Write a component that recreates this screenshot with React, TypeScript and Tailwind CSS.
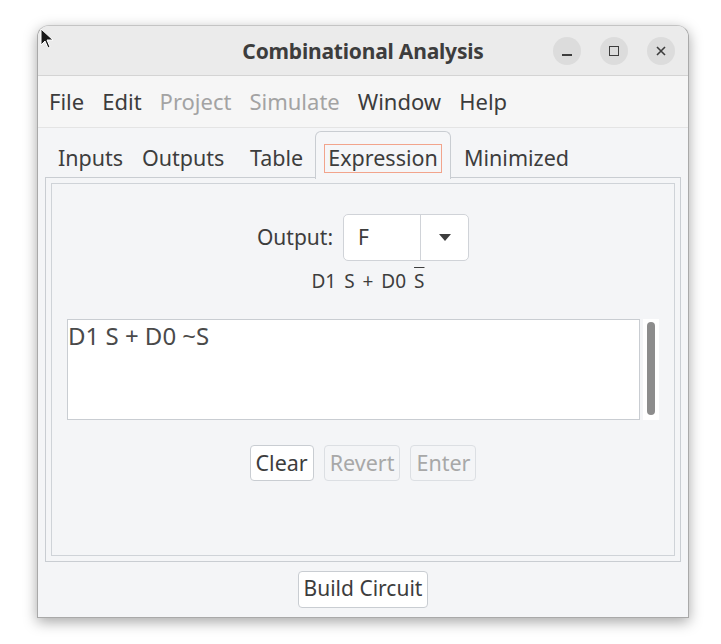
import React from 'react'

const font = { fontFamily: '"Noto Sans", "Open Sans", sans-serif' }

// small round header-bar button
const HeaderButton = ({ children }: { children: React.ReactNode }) => (
  <div className="w-[28px] h-[28px] rounded-full bg-[#dcdcdc] flex items-center justify-center text-[#3d3d3d]">
    {children}
  </div>
)

const MenuItem = ({ label, disabled }: { label: string; disabled?: boolean }) => (
  <span className={disabled ? 'text-[#a3a3a3]' : 'text-[#3c3c3c]'}>{label}</span>
)

const PushButton = ({ label, disabled }: { label: string; disabled?: boolean }) => (
  <div
    className={`h-[36px] px-[5px] flex items-center rounded-[4px] border text-[21.5px] ${
      disabled ? 'border-[#dcdfe3] bg-[#f4f5f7] text-[#a8a8a8]' : 'border-[#c9cdd2] bg-white text-[#3d3d3d]'
    }`}
  >
    {label}
  </div>
)

export default function App() {
  return (
    <div className="w-[721px] h-[644px] bg-white relative overflow-hidden" style={font}>
      <div className="ml-[37px] mt-[25px] w-[652px] h-[593px] flex flex-col rounded-t-[12px] border border-[#a9a9a9] border-t-[#c4c4c4] bg-[#f4f5f7] shadow-[0_4px_14px_rgba(0,0,0,0.35)] overflow-hidden">
        {/* title bar */}
        <div className="h-[50px] shrink-0 bg-[#ebebeb] border-b border-[#d4d4d4] relative flex items-center justify-center">
          <span className="text-[21px] font-bold text-[#3d3d3d] tracking-[-0.2px] mt-[2px]">Combinational Analysis</span>
          <div className="absolute right-[13px] top-[11px] flex gap-[19px]">
            <HeaderButton>
              <span className="block w-[10px] h-[2px] bg-[#3d3d3d] mt-[8px]" />
            </HeaderButton>
            <HeaderButton>
              <span className="block w-[10px] h-[10px] border-[1.5px] border-[#3d3d3d]" />
            </HeaderButton>
            <HeaderButton>
              <svg width="10" height="10" viewBox="0 0 10 10">
                <path d="M1 1 L9 9 M9 1 L1 9" stroke="#3d3d3d" strokeWidth="1.6" />
              </svg>
            </HeaderButton>
          </div>
        </div>

        {/* menu bar */}
        <div className="h-[52px] shrink-0 bg-[#f6f6f6] border-b border-[#e4e4e4] flex items-center gap-[18px] pl-[11px] text-[22px]">
          <MenuItem label="File" />
          <MenuItem label="Edit" />
          <MenuItem label="Project" disabled />
          <MenuItem label="Simulate" disabled />
          <MenuItem label="Window" />
          <MenuItem label="Help" />
        </div>

        {/* tabs */}
        <div className="h-[49px] shrink-0 flex items-end pl-[20px] text-[21.5px] text-[#3d3d3d] whitespace-nowrap">
          <span className="w-[84px] leading-[28px] mb-[5px]">Inputs</span>
          <span className="w-[108px] leading-[28px] mb-[5px]">Outputs</span>
          <span className="w-[65px] leading-[28px] mb-[5px]">Table</span>
          <div className="h-[48px] w-[136px] rounded-t-[6px] border border-b-0 border-[#c9cdd2] bg-[#f5f6f8] relative z-10 -mb-[2px] flex justify-center pt-[12px]">
            <span className="h-[29px] border border-[#f2a48c] px-[3px] leading-[26px]">Expression</span>
          </div>
          <span className="ml-[13px] leading-[28px] mb-[5px]">Minimized</span>
        </div>

        {/* tab panel */}
        <div className="mx-[7px] h-[385px] shrink-0 border border-[#c9cdd2] p-[5px] bg-[#f4f5f7]">
          <div className="h-full border border-[#cfd3d8] flex flex-col items-center">
            <div className="mt-[30px] flex items-center gap-[10px]">
              <span className="text-[21px] text-[#3d3d3d]">Output:</span>
              <div className="w-[126px] h-[47px] flex rounded-[5px] border border-[#d0d3d8] bg-white">
                <div className="w-[77px] border-r border-[#d0d3d8] pl-[14px] flex items-center text-[21px] text-[#3d3d3d]">F</div>
                <div className="flex-1 flex items-center justify-center">
                  <svg width="12" height="7" viewBox="0 0 12 7">
                    <path d="M0 0 L12 0 L6 7 Z" fill="#3d3d3d" />
                  </svg>
                </div>
              </div>
            </div>
            <div className="mt-[8px] ml-[10px] text-[19px] text-[#3d3d3d] leading-[24px] [word-spacing:3px]">
              D1 S + D0 <span className="overline">S</span>
            </div>

            <div className="mt-[26px] self-stretch mx-[15px] flex gap-[3px]">
              <div className="flex-1 h-[101px] border border-[#c9cdd2] bg-white text-[24px] text-[#4a4a4a] leading-[28px] pt-[2px]">
                D1 S + D0 ~S
              </div>
              <div className="w-[16px] h-[101px] bg-white flex justify-center pt-[3px]">
                <div className="w-[8px] h-[93px] rounded-full bg-[#8c8c8c]" />
              </div>
            </div>

            <div className="mt-[25px] flex gap-[10px]">
              <PushButton label="Clear" />
              <PushButton label="Revert" disabled />
              <PushButton label="Enter" disabled />
            </div>
          </div>
        </div>

        {/* bottom */}
        <div className="flex-1 flex items-center justify-center pb-[1px]">
          <div className="h-[37px] px-[5px] flex items-center rounded-[4px] border border-[#c9cdd2] bg-white text-[21px] text-[#3d3d3d]">
            Build Circuit
          </div>
        </div>
      </div>

      {/* mouse pointer */}
      <svg className="absolute left-[40px] top-[28px]" width="16" height="22" viewBox="0 0 16 22">
        <path d="M1 1 L1 17 L5 13 L8 20 L10 19 L7 12 L13 12 Z" fill="#1a1a1a" stroke="#ffffff" strokeWidth="1" />
      </svg>
    </div>
  )
}
